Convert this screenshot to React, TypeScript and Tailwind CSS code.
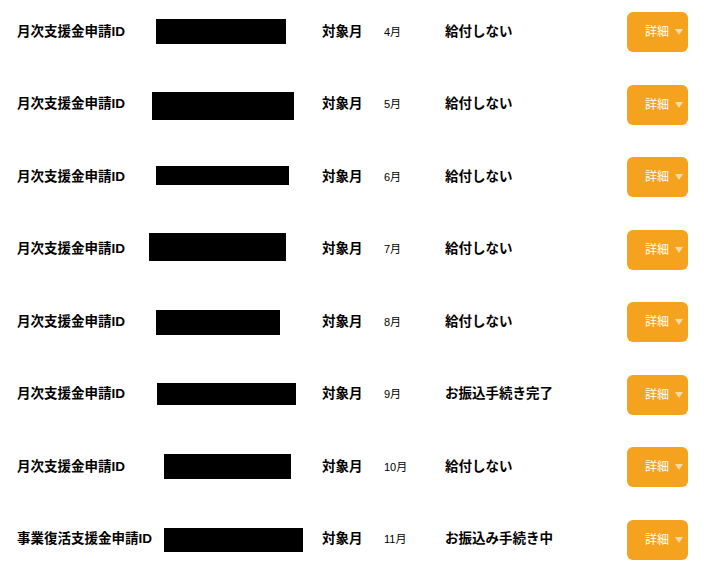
import * as React from "react";

type Row = {
  label: string;
  month: string;
  status: string;
  // redaction box: left offset from column start, size, vertical shift
  box: { left: number; w: number; h: number; dy: number };
};

const rows: Row[] = [
  { label: "月次支援金申請ID", month: "4月", status: "給付しない", box: { left: 7, w: 130, h: 25, dy: -0.5 } },
  { label: "月次支援金申請ID", month: "5月", status: "給付しない", box: { left: 3, w: 142, h: 28, dy: 1.5 } },
  { label: "月次支援金申請ID", month: "6月", status: "給付しない", box: { left: 7, w: 133, h: 19, dy: -1.5 } },
  { label: "月次支援金申請ID", month: "7月", status: "給付しない", box: { left: 0, w: 137, h: 28, dy: -3 } },
  { label: "月次支援金申請ID", month: "8月", status: "給付しない", box: { left: 7, w: 124, h: 25, dy: 0.5 } },
  { label: "月次支援金申請ID", month: "9月", status: "お振込手続き完了", box: { left: 8, w: 139, h: 22, dy: -0.5 } },
  { label: "月次支援金申請ID", month: "10月", status: "給付しない", box: { left: 15, w: 127, h: 25, dy: -0.5 } },
  { label: "事業復活支援金申請ID", month: "11月", status: "お振込み手続き中", box: { left: 15, w: 139, h: 24, dy: 0.5 } },
];

export default function App() {
  return (
    <div
      className="w-[704px] h-[571px] bg-white text-black pt-[12px] overflow-hidden"
      style={{ fontFamily: '"Liberation Sans", "Noto Sans CJK JP", sans-serif' }}
    >
      <div className="flex flex-col gap-[32.5px]">
        {rows.map((row, i) => (
          <div key={i} className="flex items-center h-10 pl-[17px] pr-[16px]">
            <div className="w-[132px] shrink-0 text-[13.5px] font-bold whitespace-nowrap">
              {row.label}
            </div>
            <div className="w-[173px] shrink-0 flex items-center">
              <div
                className="bg-black"
                style={{
                  marginLeft: row.box.left,
                  width: row.box.w,
                  height: row.box.h,
                  marginTop: row.box.dy * 2,
                }}
              />
            </div>
            <div className="w-[62px] shrink-0 text-[13.5px] font-bold">対象月</div>
            <div className="w-[61px] shrink-0 text-[11px]">{row.month}</div>
            <div className="flex-1 text-[13.5px] font-bold whitespace-nowrap">{row.status}</div>
            <button
              type="button"
              className="flex items-center h-10 w-[61px] rounded-md bg-[#f5a31f] pl-[18px] text-[12px] text-white"
            >
              <span>詳細</span>
              <svg width="8" height="6" viewBox="0 0 8 6" className="ml-[6px]">
                <path d="M0 0 H8 L4 6 Z" fill="#fbdba6" />
              </svg>
            </button>
          </div>
        ))}
      </div>
    </div>
  );
}
